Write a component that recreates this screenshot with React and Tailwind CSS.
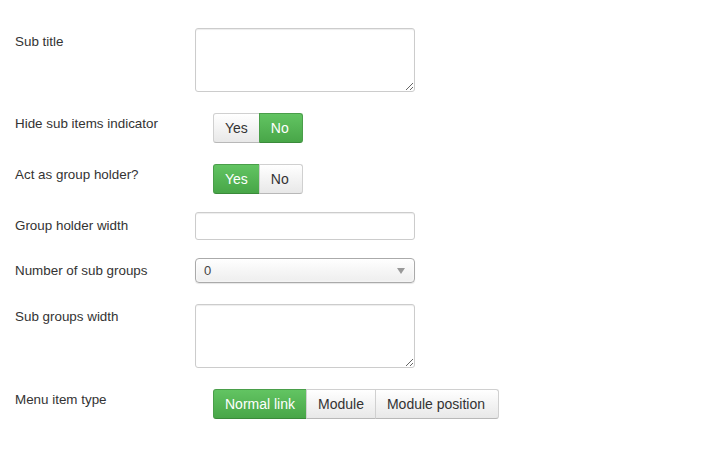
const font = { fontFamily: '"Liberation Sans", Arial, sans-serif' };

function Toggle({ options, active }) {
  return (
    <div className="flex ml-[18px]">
      {options.map((o, i) => {
        const on = o === active;
        return (
          <button
            key={o}
            className={`h-[30px] text-[14px] px-[11px] border ${
              i > 0 ? "-ml-px" : ""
            } ${
              on
                ? "bg-gradient-to-b from-[#62c462] to-[#48a648] border-[#4a9e4a] border-b-[#3a8a3a] text-white"
                : "bg-gradient-to-b from-[#ffffff] to-[#e8e8e8] border-[#d0d0d0] border-b-[#b8b8b8] text-[#333]"
            } ${i === 0 ? "rounded-l-[3px]" : ""} ${
              i === options.length - 1 ? "rounded-r-[3px] pr-[13px]" : ""
            }`}
          >
            {o}
          </button>
        );
      })}
    </div>
  );
}

function Row({ label, labelPt, mt, children }) {
  return (
    <div className={`flex ${mt}`}>
      <div className={`w-[195px] pl-[15px] text-[13.4px] text-[#333] ${labelPt}`}>{label}</div>
      {children}
    </div>
  );
}

export default function App() {
  return (
    <div className="bg-white w-[715px] h-[458px] pt-[28px]" style={font}>
      <Row label="Sub title" labelPt="pt-[4px]" mt="">
        <textarea className="w-[220px] h-[64px] border border-[#ccc] rounded-[3px] shadow-[inset_0_1px_1px_rgba(0,0,0,0.075)]" />
      </Row>
      <Row label="Hide sub items indicator" labelPt="pt-[1px]" mt="mt-[21px]">
        <Toggle options={["Yes", "No"]} active="No" />
      </Row>
      <Row label="Act as group holder?" labelPt="pt-[1px]" mt="mt-[21px]">
        <Toggle options={["Yes", "No"]} active="Yes" />
      </Row>
      <Row label="Group holder width" labelPt="pt-[4px]" mt="mt-[18px]">
        <input className="w-[220px] h-[28px] border border-[#ccc] rounded-[3px] shadow-[inset_0_1px_1px_rgba(0,0,0,0.075)]" />
      </Row>
      <Row label="Number of sub groups" labelPt="pt-[3px]" mt="mt-[18px]">
        <div className="w-[220px] h-[25px] border border-[#aaa] rounded-[4px] bg-gradient-to-b from-[#ffffff] via-[#f6f6f6] to-[#eeeeee] flex items-center justify-between px-[8px] text-[13px] text-[#444] shadow-[0_0_3px_#fff_inset,0_1px_1px_rgba(0,0,0,0.1)]">
          <span>0</span>
          <svg width="8" height="6" viewBox="0 0 8 6" className="mr-[1px]">
            <path d="M0 0 L8 0 L4 6 Z" fill="#999" />
          </svg>
        </div>
      </Row>
      <Row label="Sub groups width" labelPt="pt-[3px]" mt="mt-[21px]">
        <textarea className="w-[220px] h-[64px] border border-[#ccc] rounded-[3px] shadow-[inset_0_1px_1px_rgba(0,0,0,0.075)]" />
      </Row>
      <Row label="Menu item type" labelPt="pt-[1px]" mt="mt-[21px]">
        <Toggle options={["Normal link", "Module", "Module position"]} active="Normal link" />
      </Row>
    </div>
  );
}
